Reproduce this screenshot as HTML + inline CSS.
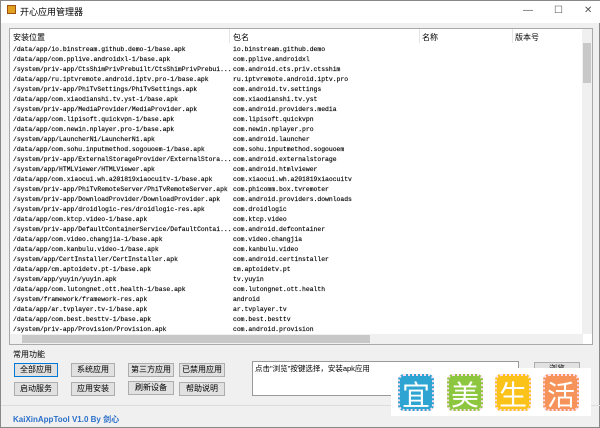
<!DOCTYPE html>
<html><head><meta charset="utf-8"><style>
*{margin:0;padding:0;box-sizing:border-box}
body{width:600px;height:428px;background:#f0f0f0;position:relative;overflow:hidden;font-family:"Liberation Sans","Noto Sans CJK SC",sans-serif;border:1px solid #888}
.title{position:absolute;left:0;top:0;width:600px;height:22px;background:#fff;font-size:9px;color:#000}
.title span{position:absolute;left:19px;top:4px}
.ico{position:absolute;left:6px;top:4px;width:9px;height:9px;background:#e0a020;border:1px solid #a05010}
.wc{position:absolute;top:3px;font-size:10px;color:#555}
.tbl{position:absolute;left:8px;top:27px;width:584px;height:317px;background:#fff;border:1px solid #aaa;overflow:hidden}
.hd{position:absolute;top:0;left:0;height:14px;width:100%;font-size:8px;color:#000}
.hd span{position:absolute;top:3px}
.vl{position:absolute;top:0;width:1px;height:14px;background:#e5e5e5}
.rows{position:absolute;left:3px;top:16px;font-family:"Liberation Mono",monospace;font-size:6.4px;line-height:10px;color:#000;-webkit-text-stroke:0.15px #000}
.rows div{white-space:nowrap;position:relative;height:10px}
.rows b{font-weight:normal;position:absolute;left:220px}
.vs{position:absolute;right:0;top:0;width:10px;height:305px;background:#f0f0f0}
.hs{position:absolute;left:0;bottom:0;height:10px;width:573px;background:#f0f0f0}
.btn{position:absolute;height:14px;background:#e1e1e1;border:1px solid #adadad;font-size:8px;text-align:center;line-height:12px;color:#000}
.ta{position:absolute;left:251px;top:360px;width:267px;height:35px;background:#fff;border:1px solid #999;font-size:7.5px;padding:1px 2px}
.logo{position:absolute;left:390px;top:367px;width:200px;height:48px;background:#fff}
.t{position:absolute;top:6px;width:36px;height:37px;border-radius:6px;color:#fff;font-size:28px;text-align:center;line-height:36px;font-family:"Noto Sans CJK SC",sans-serif;border:2px dotted #fde}
</style></head><body>
<div class="title"><div class="ico"></div><span>开心应用管理器</span>
<span class="wc" style="left:522px">—</span><span class="wc" style="left:553px">☐</span><span class="wc" style="left:583px">✕</span></div>
<div class="tbl">
<div class="hd"><span style="left:3px">安装位置</span><span style="left:223px">包名</span><span style="left:412px">名称</span><span style="left:505px">版本号</span>
<div class="vl" style="left:219px"></div><div class="vl" style="left:409px"></div><div class="vl" style="left:502px"></div></div>
<div class="rows">
<div>/data/app/io.binstream.github.demo-1/base.apk<b>io.binstream.github.demo</b></div>
<div>/data/app/com.pplive.androidxl-1/base.apk<b>com.pplive.androidxl</b></div>
<div>/system/priv-app/CtsShimPrivPrebuilt/CtsShimPrivPrebui...<b>com.android.cts.priv.ctsshim</b></div>
<div>/data/app/ru.iptvremote.android.iptv.pro-1/base.apk<b>ru.iptvremote.android.iptv.pro</b></div>
<div>/system/priv-app/PhiTvSettings/PhiTvSettings.apk<b>com.android.tv.settings</b></div>
<div>/data/app/com.xiaodianshi.tv.yst-1/base.apk<b>com.xiaodianshi.tv.yst</b></div>
<div>/system/priv-app/MediaProvider/MediaProvider.apk<b>com.android.providers.media</b></div>
<div>/data/app/com.lipisoft.quickvpn-1/base.apk<b>com.lipisoft.quickvpn</b></div>
<div>/data/app/com.newin.nplayer.pro-1/base.apk<b>com.newin.nplayer.pro</b></div>
<div>/system/app/LauncherN1/LauncherN1.apk<b>com.android.launcher</b></div>
<div>/data/app/com.sohu.inputmethod.sogouoem-1/base.apk<b>com.sohu.inputmethod.sogouoem</b></div>
<div>/system/priv-app/ExternalStorageProvider/ExternalStora...<b>com.android.externalstorage</b></div>
<div>/system/app/HTMLViewer/HTMLViewer.apk<b>com.android.htmlviewer</b></div>
<div>/data/app/com.xiaocui.wh.a201819xiaocuitv-1/base.apk<b>com.xiaocui.wh.a201819xiaocuitv</b></div>
<div>/system/priv-app/PhiTvRemoteServer/PhiTvRemoteServer.apk<b>com.phicomm.box.tvremoter</b></div>
<div>/system/priv-app/DownloadProvider/DownloadProvider.apk<b>com.android.providers.downloads</b></div>
<div>/system/priv-app/droidlogic-res/droidlogic-res.apk<b>com.droidlogic</b></div>
<div>/data/app/com.ktcp.video-1/base.apk<b>com.ktcp.video</b></div>
<div>/system/priv-app/DefaultContainerService/DefaultContai...<b>com.android.defcontainer</b></div>
<div>/data/app/com.video.changjia-1/base.apk<b>com.video.changjia</b></div>
<div>/data/app/com.kanbulu.video-1/base.apk<b>com.kanbulu.video</b></div>
<div>/system/app/CertInstaller/CertInstaller.apk<b>com.android.certinstaller</b></div>
<div>/data/app/cm.aptoidetv.pt-1/base.apk<b>cm.aptoidetv.pt</b></div>
<div>/system/app/yuyin/yuyin.apk<b>tv.yuyin</b></div>
<div>/data/app/com.lutongnet.ott.health-1/base.apk<b>com.lutongnet.ott.health</b></div>
<div>/system/framework/framework-res.apk<b>android</b></div>
<div>/data/app/ar.tvplayer.tv-1/base.apk<b>ar.tvplayer.tv</b></div>
<div>/data/app/com.best.besttv-1/base.apk<b>com.best.besttv</b></div>
<div>/system/priv-app/Provision/Provision.apk<b>com.android.provision</b></div>
</div>
<div class="vs"><div style="position:absolute;left:1px;top:14px;width:8px;height:40px;background:#c8c8c8"></div></div>
<div class="hs"><div style="position:absolute;left:12px;top:1px;width:348px;height:8px;background:#c8c8c8"></div></div>
</div>
<div style="position:absolute;left:12px;top:348px;font-size:8px">常用功能</div>
<div class="btn" style="left:13px;top:362px;width:44px;border-color:#0078d7">全部应用</div>
<div class="btn" style="left:70px;top:362px;width:44px">系统应用</div>
<div class="btn" style="left:127px;top:362px;width:46px">第三方应用</div>
<div class="btn" style="left:178px;top:362px;width:46px">已禁用应用</div>
<div class="btn" style="left:13px;top:381px;width:44px">启动服务</div>
<div class="btn" style="left:70px;top:381px;width:44px">应用安装</div>
<div class="btn" style="left:127px;top:380px;width:46px">刷新设备</div>
<div class="btn" style="left:178px;top:381px;width:46px">帮助说明</div>
<div class="ta">点击"浏览"按键选择，安装apk应用</div>
<div class="btn" style="left:533px;top:361px;width:46px">浏览</div>
<div style="position:absolute;left:0;top:404px;width:600px;height:1px;background:#ddd"></div>
<div style="position:absolute;left:12px;top:413px;font-size:8px;font-weight:bold;color:#2a6fc9">KaiXinAppTool V1.0 By 剑心</div>
<div class="logo">
<div class="t" style="left:7px;background:#2ea4d2">宜</div>
<div class="t" style="left:56px;background:#8dc63f">美</div>
<div class="t" style="left:104px;background:#fbc31a">生</div>
<div class="t" style="left:152px;background:#f6935a">活</div>
</div>
</body></html>
